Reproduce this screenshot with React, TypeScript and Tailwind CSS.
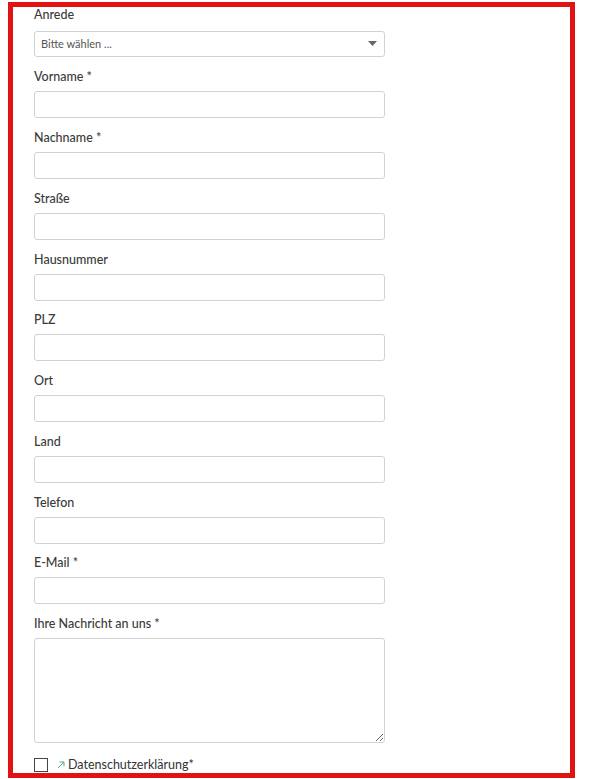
const fields = [
  'Vorname *',
  'Nachname *',
  'Straße',
  'Hausnummer',
  'PLZ',
  'Ort',
  'Land',
  'Telefon',
  'E-Mail *',
]

function Label({ children }: { children: React.ReactNode }) {
  return <label className="block h-4 text-[12.5px] leading-4 font-medium text-[#3a3a3a]">{children}</label>
}

export default function App() {
  return (
    <div className="min-h-[779px] bg-white pt-[2px] pl-[8px] font-['Lato',sans-serif]">
      <div className="h-[776px] w-[567px] overflow-hidden border-[5px] border-[#e01212] bg-white pl-[21px]">
        <div className="w-[351px]">
          <Label>Anrede</Label>
          <div className="relative mt-[7px] mb-[12px]">
            <select className="h-[26px] w-full appearance-none rounded-[3px] border border-[#d2d2d2] bg-white pl-[6px] text-[11px] text-[#555] outline-none">
              <option>Bitte wählen ...</option>
            </select>
            <svg className="pointer-events-none absolute top-[11px] right-[8px]" width="9" height="5" viewBox="0 0 9 5">
              <path d="M0 0h9L4.5 5z" fill="#666" />
            </svg>
          </div>

          {fields.map((f) => (
            <div key={f} className="mb-[11.75px]">
              <Label>{f}</Label>
              <input
                type="text"
                className="mt-[6px] block h-[27px] w-full rounded-[3px] border border-[#d2d2d2] bg-white px-2 text-[12px] outline-none"
              />
            </div>
          ))}

          <Label>Ihre Nachricht an uns *</Label>
          <textarea className="mt-[6px] block h-[105px] w-full rounded-[3px] border border-[#d2d2d2] bg-white px-2 text-[12px] outline-none" />

          <div className="mt-[14px] flex items-center">
            <span className="h-[14px] w-[14px] shrink-0 border border-[#444] bg-white" />
            <svg className="ml-[9px]" width="8" height="8" viewBox="0 0 8 8" fill="none" stroke="#4fa89c" strokeWidth="1">
              <path d="M1 7L7 1M2.5 1H7v4.5" />
            </svg>
            <span className="ml-[3px] text-[12.5px] leading-4 text-[#333]">Datenschutzerklärung*</span>
          </div>
        </div>
      </div>
    </div>
  )
}
